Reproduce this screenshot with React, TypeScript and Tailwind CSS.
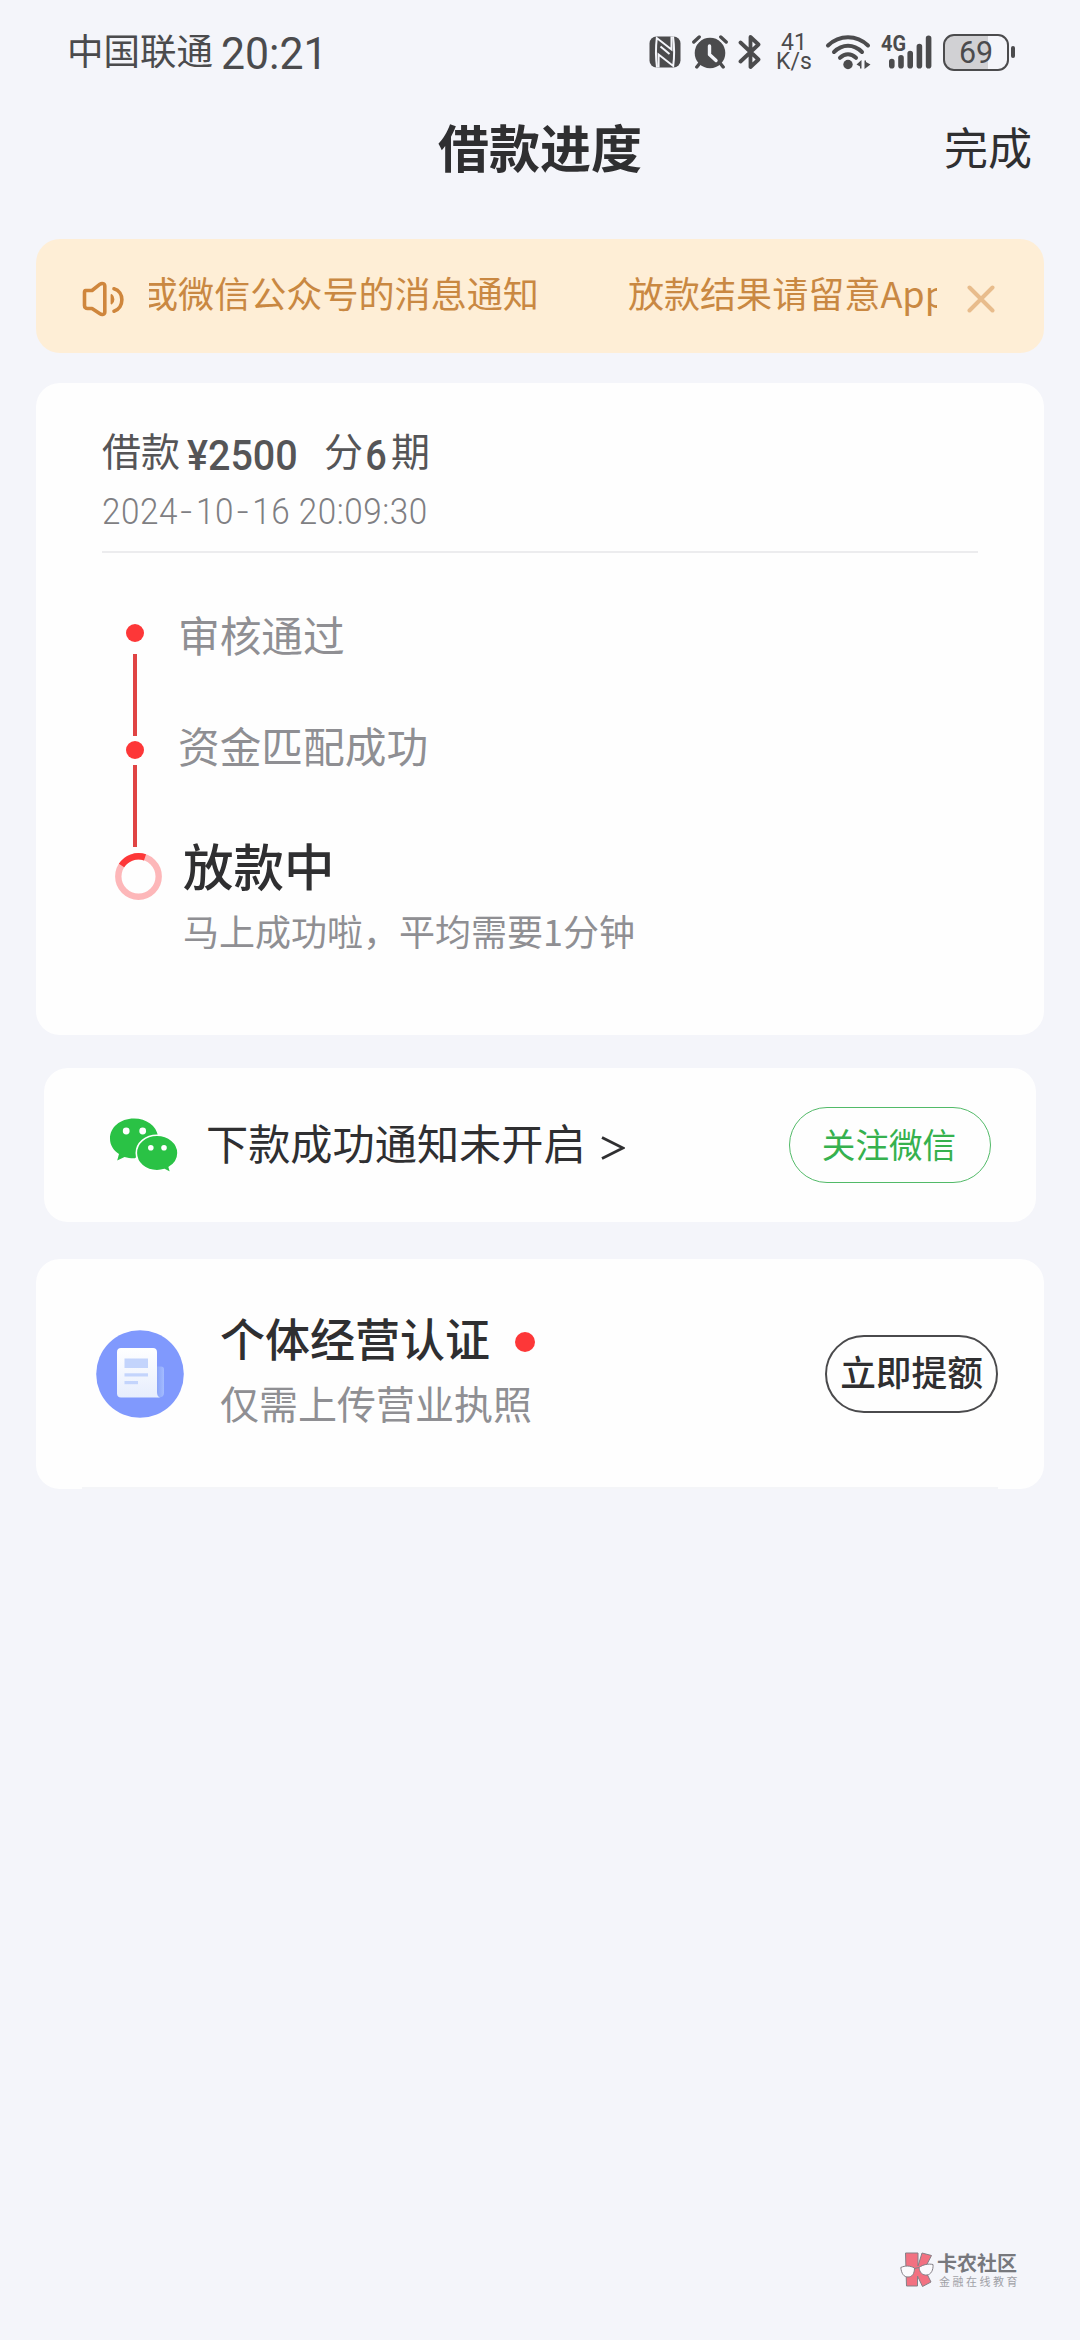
import { ReactNode } from 'react';
import clsx from 'clsx';

const NfcIcon = () => (
  <svg className="h-8 w-8" viewBox="0 0 32 32" fill="none">
    <rect x="0.5" y="0.5" width="31" height="31" rx="7" fill="#4b4b4d" />
    <path d="M8 31.5C6.8 22 6.8 10 7.8 2L22.5 13.5V0.5" stroke="#f4f5fa" strokeWidth="2" />
    <path d="M24 0.5C25.3 10 25.3 22 24.2 30L9.6 18.5V31.5" stroke="#f4f5fa" strokeWidth="2" />
    <path d="M11.5 10.5L20.5 18" stroke="#f4f5fa" strokeWidth="2" />
  </svg>
);

const AlarmIcon = () => (
  <svg className="h-[34px] w-9" viewBox="0 0 36 34" fill="none">
    <circle cx="18" cy="18" r="15.3" fill="#4b4b4d" />
    <path d="M1.8 7L7.2 2M34.2 7L28.8 2" stroke="#f4f5fa" strokeWidth="7" strokeLinecap="round" />
    <path d="M1.8 7L7.2 2M34.2 7L28.8 2" stroke="#4b4b4d" strokeWidth="3.4" strokeLinecap="round" />
    <path d="M8 28L4.8 32M28 28l3.2 4" stroke="#4b4b4d" strokeWidth="3.4" strokeLinecap="round" />
    <path d="M17.5 11v8.5l6.5 6" stroke="#f4f5fa" strokeWidth="3.4" strokeLinecap="round" strokeLinejoin="round" />
  </svg>
);

const BluetoothIcon = () => (
  <svg className="h-9 w-6" viewBox="0 0 24 36" fill="none">
    <path
      d="M2.5 8.5L20.5 25.5L12.5 33V3L20.5 10.5L2.5 27.5"
      stroke="#4b4b4d"
      strokeWidth="3.8"
      strokeLinecap="round"
      strokeLinejoin="round"
    />
  </svg>
);

const WifiIcon = () => (
  <svg className="h-9 w-[46px]" viewBox="0 0 46 36" fill="none">
    <g stroke="#4b4b4d" strokeWidth="4" strokeLinecap="round">
      <path d="M3 11.5C14.5 0.5 31.5 0.5 43 11.5" />
      <path d="M9 18C17.5 9.8 28.5 9.8 37 18" />
      <path d="M15 23.8C20 19.2 26 19.2 31 23.8" />
    </g>
    <circle cx="23" cy="30.5" r="4.7" fill="#4b4b4d" />
    <path d="M31.5 30.5L36.5 26V34.5H35V32.5ZM39.5 26.5H41V28L45.5 30.5L39.5 35Z" fill="#4b4b4d" />
  </svg>
);

const SignalIcon = () => (
  <svg className="h-9 w-[52px] overflow-visible" viewBox="0 0 52 36" fill="none">
    <g stroke="#4b4b4d" strokeWidth="5.6" strokeLinecap="round">
      <path d="M10.8 27.5v4.2M20 23.8v7.9M29.2 19.5v12.2M38.4 12.5v19.2M47.6 4.3v27.4" />
    </g>
    <text x="0" y="17" fill="#4b4b4d" fontFamily="Roboto" fontWeight="700" fontSize="21.5" textLength="25" lengthAdjust="spacingAndGlyphs">
      4G
    </text>
  </svg>
);

const Battery = () => (
  <div className="flex items-center gap-0.5">
    <div className="flex h-[37px] w-[66px] items-center justify-center rounded-[11px] border-2 border-[#4b4b4d] bg-linear-to-r from-[#d1d1d4] from-70% to-transparent to-70%">
      <span className="scale-x-95 font-[Roboto] text-[32px] leading-none">69</span>
    </div>
    <div className="h-3 w-1 rounded-sm bg-[#4b4b4d]" />
  </div>
);

const SpeakerIcon = () => (
  <svg className="h-9 w-11" viewBox="0 0 44 36" fill="none" stroke="#cf863c" strokeWidth="3.6" strokeLinecap="round" strokeLinejoin="round">
    <path d="M4.5 9.5H11L19 3.2C21 1.8 23.8 2.5 23.8 5V31C23.8 33.5 21 34.2 19 32.8L11 27.5H6.5C4.8 27.5 3.5 26.5 3.5 24.5V11.5C3.5 10.2 3.8 9.5 4.5 9.5Z" />
    <path d="M30.5 14C33.2 16 33.2 20.5 30.5 22.5Z" fill="#cf863c" strokeWidth="1.8" />
    <path d="M33 7.8C43.5 10.5 43.5 27 33 30.2" />
  </svg>
);

const WechatIcon = () => (
  <svg className="h-[55px] w-[70px]" viewBox="0 0 70 55">
    <path d="M25 0.5C11 0.5 1 9.5 1 20.5C1 27 4.3 32.3 10 36L8.2 42.5L15.5 39C19 40 22 40.3 26 40.2L49 18C47.5 8 37.5 0.5 25 0.5Z" fill="#2ac245" />
    <path
      d="M48 17.3C36.5 17.3 27.3 25 27.3 35C27.3 45 36.5 52.7 48 52.7C50.8 52.7 53.2 52.3 55.5 51.6L62 55L60.3 49.3C65.7 46 69 41 69 35C69 25 59.5 17.3 48 17.3Z"
      fill="#2ac245"
      stroke="#fff"
      strokeWidth="1.6"
    />
    <circle cx="17.2" cy="13" r="3.4" fill="#fff" />
    <circle cx="33.7" cy="13" r="3.4" fill="#fff" />
    <circle cx="41.8" cy="29.7" r="2.8" fill="#fff" />
    <circle cx="55" cy="29.7" r="2.8" fill="#fff" />
  </svg>
);

const LicenseIcon = () => (
  <svg className="h-[88px] w-[88px]" viewBox="0 0 88 88">
    <defs>
      <linearGradient id="page" x1="0" y1="0" x2="0" y2="1">
        <stop offset="0" stopColor="#ffffff" />
        <stop offset="1" stopColor="#e6edfd" />
      </linearGradient>
      <linearGradient id="fold" x1="0" y1="0" x2="1" y2="0">
        <stop offset="0" stopColor="#7f9af5" />
        <stop offset="1" stopColor="#a4bcff" />
      </linearGradient>
    </defs>
    <circle cx="44" cy="44" r="43.8" fill="#8099fd" />
    <path d="M60 36.5H65C67 36.5 68 37.5 68 39.5V63C68 66 66 67.5 62 67.5H58Z" fill="url(#fold)" />
    <path d="M25 18H57C59.5 18 61 19.5 61 22V62C61 65 62 67 64 67.5H25C22.5 67.5 21 66 21 63.5V22C21 19.5 22.5 18 25 18Z" fill="url(#page)" />
    <rect x="28.5" y="28.5" width="23.5" height="9.5" fill="#c3d4fc" />
    <rect x="28.5" y="43.3" width="23.5" height="3.2" fill="#c3d4fc" />
    <rect x="28.5" y="51" width="13.5" height="3.2" fill="#c3d4fc" />
  </svg>
);

const WatermarkLogo = () => (
  <svg className="h-9 w-[34px]" viewBox="0 0 34 36" stroke="#858087" strokeWidth="1" strokeLinejoin="round">
    <path d="M5.5 1H18V14L22 1L31.5 3.5L24.5 17L31 30L22.5 34.5L17.5 24V34H6.5Z" fill="#f27181" />
    <path d="M0.8 15.5C5 13.5 10 13.5 14.5 16C14.5 22 12 25 8 25C4 25 1.5 22 0.8 15.5Z" fill="#fbfbfd" />
    <path d="M19 15.5C23 12.5 28.5 11.5 33 12.5C33.5 18 31 22.5 27 23C22.5 23.5 19.5 20.5 19 15.5Z" fill="#fbfbfd" />
    <path d="M14.5 16.5L19 15.5" fill="none" />
  </svg>
);

const Card = ({ children, className }: { children: ReactNode; className?: string }) => (
  <div className={clsx('rounded-[24px] bg-[#fefefe]', className)}>{children}</div>
);

const Rail = () => (
  <div className="flex w-[52px] flex-col items-center pt-[71px]">
    <div className="h-[18px] w-[18px] rounded-full bg-[#fd3738]" />
    <div className="mt-3 h-[82px] w-[4px] bg-[#e04444]" />
    <div className="mt-[5px] h-[18px] w-[18px] rounded-full bg-[#fd3738]" />
    <div className="mt-[6px] h-[82px] w-[4px] bg-[#e04444]" />
    <svg className="mt-[6px] ml-[6px] h-[47px] w-[47px]" viewBox="0 0 47 47" fill="none" strokeWidth="6.4">
      <circle cx="23.5" cy="23.5" r="20.2" stroke="#fdb7b9" />
      <path d="M6.5 12.5A20.2 20.2 0 0 1 30 4.4" stroke="#fd3738" />
    </svg>
  </div>
);

const App = () => {
  return (
    <div className="flex h-[2340px] w-[1080px] flex-col overflow-hidden bg-[#f4f5fa] font-['Noto_Sans_CJK_SC',sans-serif] text-[#2f2f31]">
      {/* status bar */}
      <div className="flex h-[100px] justify-between pr-[65px] pl-[67px] text-[#4b4b4d]">
        <div className="flex items-center text-[36.5px] leading-none">
          <span>中国联通</span>
          <span className="ml-[8px] origin-left scale-x-[0.95] pt-[6px] font-[Roboto] text-[45px]">20:21</span>
        </div>
        <div className="mt-[33px] flex h-[38px] items-center">
          <NfcIcon />
          <div className="ml-[11px]">
            <AlarmIcon />
          </div>
          <div className="ml-[10px]">
            <BluetoothIcon />
          </div>
          <div className="ml-[14px] flex w-9 flex-col items-center font-[Roboto] text-[23px] leading-[19px]">
            <span>41</span>
            <span>K/s</span>
          </div>
          <div className="ml-[13px]">
            <WifiIcon />
          </div>
          <div className="ml-[10px]">
            <SignalIcon />
          </div>
          <div className="ml-[10px]">
            <Battery />
          </div>
        </div>
      </div>

      <div className="grid h-[92px] grid-cols-3 items-center px-[48px]">
        <div />
        <div className="text-center text-[51px] leading-none font-bold whitespace-nowrap">借款进度</div>
        <div className="text-right text-[44px] leading-none">完成</div>
      </div>

      {/* notice */}
      <div className="mx-9 mt-[47px] flex h-[114px] rounded-[24px] bg-[#feeed6] pl-[45px] text-[#c98842]">
        <div className="mt-[42px]">
          <SpeakerIcon />
        </div>
        <div className="mt-[28px] ml-[24px] flex h-[50px] w-[788px] overflow-hidden text-[36.1px] leading-[50px] whitespace-nowrap">
          <span className="-ml-[7px]">或微信公众号的消息通知</span>
          <span className="ml-[89px]">放款结果请留意App</span>
        </div>
        <svg className="mt-[46px] ml-[30px] h-7 w-7" viewBox="0 0 28 28" stroke="#e8bc8c" strokeWidth="4" strokeLinecap="round">
          <path d="M2.5 2.5l23 23M25.5 2.5l-23 23" />
        </svg>
      </div>

      {/* loan progress */}
      <Card className="mx-9 mt-[30px] h-[652px] px-[66px] pt-[38px]">
        <div className="flex h-14 text-[39px] leading-[56px] text-[#555557]">
          <span>借款</span>
          <span className="ml-[7px] w-[112px] origin-left scale-x-[0.94] pt-[7px] font-[Roboto] text-[42px] leading-[56px] font-medium">
            ¥2500
          </span>
          <span className="ml-[25px]">分</span>
          <span className="w-[26px] scale-x-90 pt-[7px] text-center font-[Roboto] text-[42px] leading-[56px] font-medium">6</span>
          <span className="ml-[2px]">期</span>
        </div>
        <div className="mt-[15px] h-10 origin-left scale-x-[0.91] font-[Roboto] text-[36.5px] leading-10 font-light tracking-[0.6px] text-[#7f7f83]">
          2024<span className="inline-block w-5 scale-x-125 text-center">-</span>10
          <span className="inline-block w-5 scale-x-125 text-center">-</span>16 20:09:30
        </div>
        <div className="mt-[19px] h-0.5 bg-[#ececee]" />
        <div className="flex pl-[7px] text-[#8f8f93]">
          <Rail />
          <div className="pt-[51px] pl-[17px]">
            <div className="h-[60px] text-[41.7px] leading-[60px]">审核通过</div>
            <div className="mt-[51px] h-[60px] text-[41.7px] leading-[60px]">资金匹配成功</div>
            <div className="mt-[54px] h-[70px] pl-[5px] text-[50.5px] leading-[70px] font-medium text-[#2f2f31]">放款中</div>
            <div className="mt-[6px] h-[50px] pl-[5px] text-[36px] leading-[50px]">马上成功啦，平均需要1分钟</div>
          </div>
        </div>
      </Card>

      {/* wechat notice */}
      <Card className="mx-[44px] mt-[33px] flex h-[154px] items-center pr-[45px] pl-[65px]">
        <WechatIcon />
        <div className="ml-[27px] pb-[6px] text-[42.2px] leading-none">下款成功通知未开启</div>
        <svg className="mt-[5px] ml-[15px] h-6 w-6" viewBox="0 0 24 24" fill="none" stroke="#2f2f31" strokeWidth="2.8">
          <path d="M1 1.5L22 12L1 22.5" />
        </svg>
        <div className="ml-auto flex h-[76px] w-[202px] items-center justify-center rounded-full border border-[#52ba68] pr-[2px] pb-[3px] text-[33.6px] leading-none text-[#36b14e]">
          关注微信
        </div>
      </Card>

      {/* business certification */}
      <Card className="mx-9 mt-[37px] flex h-[230px] flex-col">
        <div className="flex flex-1 items-center pt-0.5 pr-[46px] pl-[60px]">
          <LicenseIcon />
          <div className="ml-[36px] pb-[9px]">
            <div className="flex h-[64px] items-center text-[45px] leading-none font-medium">
              个体经营认证
              <span className="mt-[9px] ml-[25px] h-5 w-5 rounded-full bg-[#fd3738]" />
            </div>
            <div className="h-[64px] text-[39px] leading-[64px] text-[#8f8f93]">仅需上传营业执照</div>
          </div>
          <div className="ml-auto flex h-[78px] w-[173px] items-center justify-center rounded-full border-2 border-[#4a4a4c] pb-[7px] text-[35.7px] leading-none font-medium">
            立即提额
          </div>
        </div>
        <div className="mx-[46px] h-0.5 bg-[#f4f5f8]" />
      </Card>

      {/* watermark */}
      <div className="mt-auto mr-[60px] mb-[51px] flex justify-end">
        <WatermarkLogo />
        <div className="ml-[3px] pt-px">
          <div className="text-[20px] leading-[20px] font-bold text-[#77787d]">卡农社区</div>
          <div className="pl-0.5 text-[11px] leading-[16px] tracking-[2.5px] text-[#a0a1a7]">金融在线教育</div>
        </div>
      </div>
    </div>
  );
};

export default App;
